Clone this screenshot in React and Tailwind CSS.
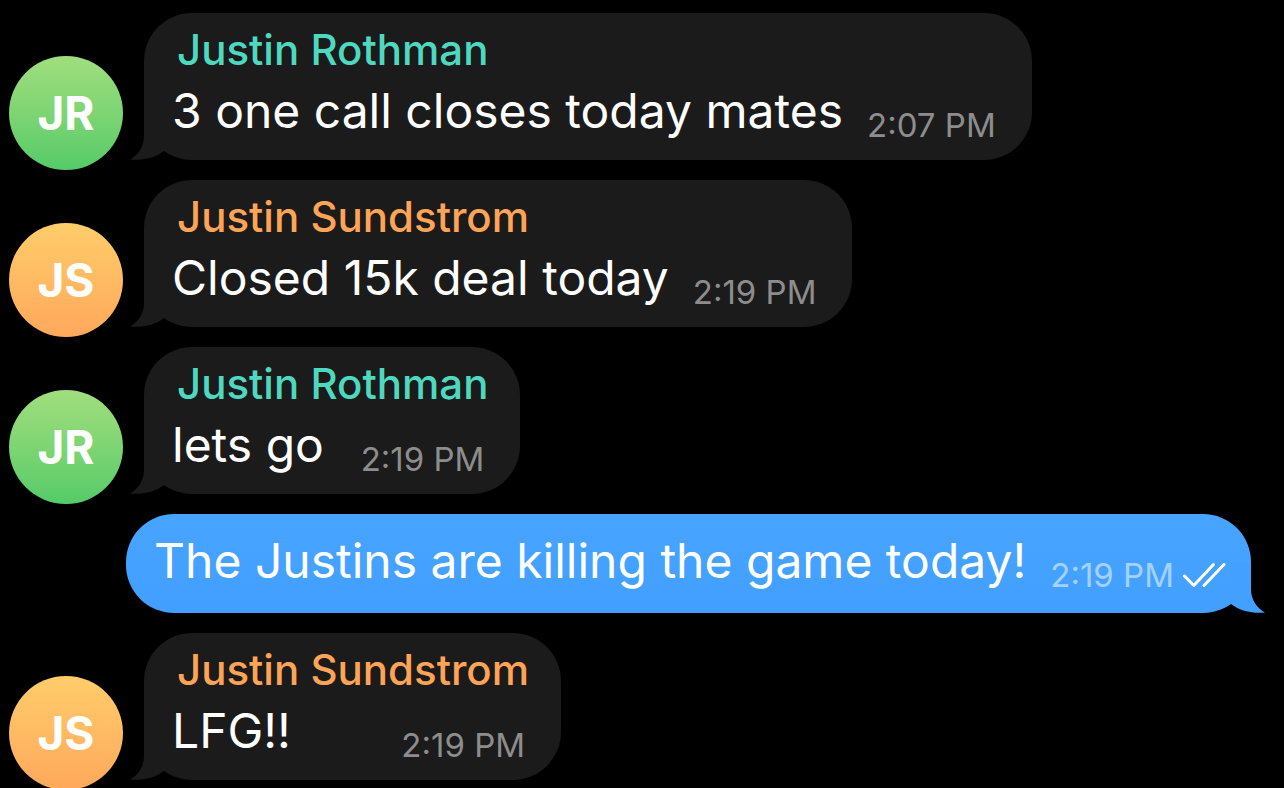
const people = {
  JR: { name: "Justin Rothman", initials: "JR", color: "text-[#4fd8c0]", avatar: "from-[#a0de7e] to-[#54cb68]" },
  JS: { name: "Justin Sundstrom", initials: "JS", color: "text-[#ffa357]", avatar: "from-[#ffcd6a] to-[#ffa85c]" },
};

const messages = [
  { from: "JR", text: "3 one call closes today mates", time: "2:07 PM" },
  { from: "JS", text: "Closed 15k deal today", time: "2:19 PM" },
  { from: "JR", text: "lets go", time: "2:19 PM" },
  { text: "The Justins are killing the game today!", time: "2:19 PM" },
  { from: "JS", text: "LFG!!", time: "2:19 PM" },
];

function Tail({ className }) {
  return (
    <svg className={`absolute bottom-0 h-[50px] w-[34px] ${className}`} viewBox="0 0 34 50" fill="currentColor" aria-hidden="true">
      <path d="M14 0V26C14 37 8 45 0 49.6C13 50.6 25 48 34 41V0Z" />
    </svg>
  );
}

function Incoming({ message }) {
  const person = people[message.from];
  return (
    <li className="flex items-end gap-[21px] pl-[9px]">
      <div className={`-mb-[10px] flex size-[114px] shrink-0 items-center justify-center rounded-full bg-linear-to-b text-[46px] leading-none font-bold text-white ${person.avatar}`}>
        {person.initials}
      </div>
      <article className="relative flex h-[147px] flex-col rounded-[48px] bg-[#1b1b1b] pt-[12px] pr-[36px] pl-[28px]">
        <Tail className="-left-[14px] text-[#1b1b1b]" />
        <h2 className={`relative -mr-[4px] pl-[5px] text-[42px] leading-[50px] font-medium whitespace-nowrap ${person.color}`}>{person.name}</h2>
        <div className="relative flex items-end justify-between gap-[24px]">
          <p className="text-[48px] leading-[72px] whitespace-nowrap text-white">{message.text}</p>
          <time className="pb-[3px] text-[33px] leading-[38px] whitespace-nowrap text-[#8d8d8d]">{message.time}</time>
        </div>
      </article>
    </li>
  );
}

function Outgoing({ message }) {
  return (
    <li className="flex justify-end pr-[33px]">
      <article className="relative flex h-[99px] items-end gap-[24px] rounded-[48px] bg-linear-to-b from-[#47a4ff] to-[#429fff] pr-[25px] pb-[16px] pl-[28px]">
        <Tail className="-right-[14px] -scale-x-100 text-[#43a0ff]" />
        <p className="relative text-[48px] leading-[72px] whitespace-nowrap text-white">{message.text}</p>
        <div className="relative flex items-center gap-[8px] pb-[3px]">
          <time className="text-[33px] leading-[38px] whitespace-nowrap text-[#a4d2ff]">{message.time}</time>
          <svg className="h-[26px] w-[44px]" viewBox="0 0 44 26" fill="none" stroke="white" strokeWidth="3" strokeLinecap="round" strokeLinejoin="round" role="img" aria-label="Read">
            <path d="M2.5 14L11.8 23.5L31.5 2.5M22 23.5L42 2.5" />
          </svg>
        </div>
      </article>
    </li>
  );
}

export default function App() {
  return (
    <main className="h-screen overflow-hidden bg-black pt-[13px] font-[Inter,sans-serif]">
      <ol className="flex flex-col gap-[20px]">
        {messages.map((message, i) => message.from ? <Incoming key={i} message={message} /> : <Outgoing key={i} message={message} />)}
      </ol>
    </main>
  );
}
